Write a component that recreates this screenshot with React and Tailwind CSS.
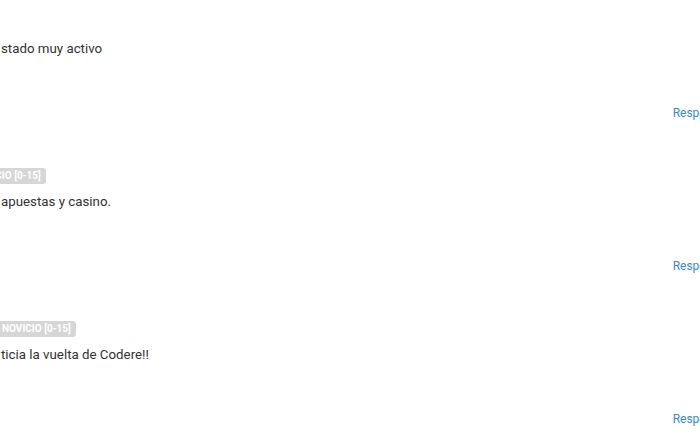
import React from "react";

const comments = [
  { badgeOffset: null, text: "stado muy activo" },
  { badgeOffset: "-ml-[33px]", text: "apuestas y casino." },
  { badgeOffset: "-ml-[3px]", text: "ticia la vuelta de Codere!!" },
];

function Comment({ badgeOffset, text }) {
  return (
    <div className="flex flex-col mb-[45px]">
      {/* usuario + rango */}
      <div className="h-4 flex items-center">
        {badgeOffset && (
          <span className={`${badgeOffset} h-4 px-[5px] rounded-[3px] bg-[#d6d6d6] text-white text-[10px] font-bold leading-4 whitespace-nowrap`}>
            NOVICIO [0-15]
          </span>
        )}
      </div>

      {/* texto */}
      <p className="mt-2 h-5 leading-5 text-[13.3px] text-[#333333] whitespace-nowrap pl-px">{text}</p>

      {/* acciones */}
      <div className="mt-[44px] h-5 w-[730px] flex justify-end">
        <a href="#" className="text-[12px] leading-5 text-[#3a8ad6] whitespace-nowrap">Responder</a>
      </div>
    </div>
  );
}

export default function App() {
  return (
    <div className="w-[700px] h-[441px] overflow-hidden bg-white" style={{ fontFamily: "Roboto, 'Liberation Sans', sans-serif" }}>
      <div className="pt-[15px]">
        {comments.map((c, idx) => (
          <Comment key={idx} {...c} />
        ))}
      </div>
    </div>
  );
}
